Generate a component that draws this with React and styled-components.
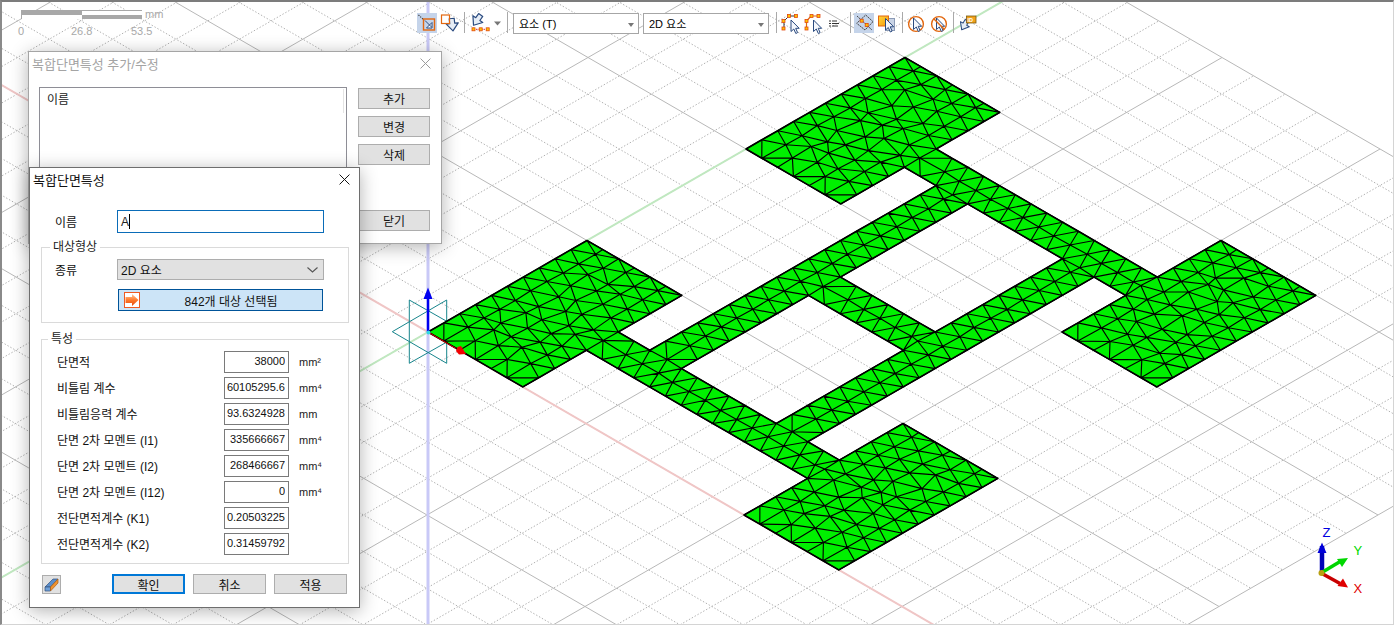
import React from 'react';
import styled, { createGlobalStyle } from 'styled-components';

const FONT = `"Liberation Sans", "Noto Sans CJK KR", sans-serif`;

const Global = createGlobalStyle`
  html, body { margin: 0; padding: 0; background: #fff; overflow: hidden; }
  * { box-sizing: border-box; }
`;

const Stage = styled.main`
  position: relative;
  width: 1394px;
  height: 625px;
  overflow: hidden;
  background: #fff;
  font: 12px ${FONT};
  color: #000;
`;
const Viewport = styled.svg`
  position: absolute;
  inset: 0;
  display: block;
`;
const Frame = styled.div`
  position: absolute;
  inset: 0;
  border-top: 2px solid #7c7c7c;
  border-left: 2px solid #8a8a8a;
  border-right: 1px solid #d4d4d4;
  border-bottom: 1px solid #d4d4d4;
  pointer-events: none;
`;

/* scale bar */
const ScaleBar = styled.div`
  position: absolute;
  left: 21px;
  top: 10px;
  width: 160px;
  color: #a8a8a8;
  font-size: 11px;
`;
const ScaleTrack = styled.div`
  display: flex;
  align-items: center;
  gap: 3px;
  height: 9px;
  line-height: 9px;
`;
const ScaleBars = styled.div`
  display: grid;
  grid-template-columns: 60px 60px;
  grid-template-rows: 4px 4px;
  width: 121px;
  height: 9px;
  border: 1px solid #a8a8a8;
`;
const ScaleCell = styled.i`
  display: block;
  background: ${p => (p.$dark ? '#a8a8a8' : '#fff')};
`;
const ScaleLabels = styled.div`
  display: flex;
  margin-top: 6px;
  margin-left: -3px;
  line-height: 13px;
`;
const ScaleLabel = styled.span`
  width: ${p => p.$w}px;
`;

/* toolbar */
const Toolbar = styled.nav`
  position: absolute;
  left: 417px;
  top: 13px;
  display: flex;
  align-items: flex-start;
`;
const Tool = styled.button`
  display: block;
  width: ${p => p.$w}px;
  height: 20px;
  margin: 0 0 0 ${p => p.$ml || 0}px;
  padding: 0;
  border: 0;
  background: ${p => (p.$active ? '#c5d4ea' : 'transparent')};
  svg { display: block; overflow: visible; }
`;
const Sep = styled.span`
  display: block;
  width: 1px;
  height: 21px;
  margin: -1px 0 0 ${p => p.$ml}px;
  background: #a9a9a9;
`;
const ToolSelect = styled.div`
  display: flex;
  align-items: center;
  justify-content: space-between;
  width: ${p => p.$w}px;
  height: 21px;
  margin-left: ${p => p.$ml}px;
  padding: 0 4px 0 5px;
  border: 1.5px solid #a6a6a6;
  background: #fff;
  font-size: 11px;
  line-height: 18px;
`;
const Caret = styled.i`
  width: 0;
  height: 0;
  border-left: 3.5px solid transparent;
  border-right: 3.5px solid transparent;
  border-top: 4px solid #777;
  margin-top: 2px;
`;

/* windows */
const Win = styled.section`
  position: absolute;
  left: ${p => p.$x}px;
  top: ${p => p.$y}px;
  width: ${p => p.$w}px;
  height: ${p => p.$h}px;
  display: flex;
  flex-direction: column;
  background: #fff;
  border: 1px solid ${p => (p.$active ? '#6e6e6e' : '#a5a5a5')};
  box-shadow: 0 3px 17px rgba(0, 0, 0, 0.3);
`;
const TitleBar = styled.header`
  display: flex;
  align-items: center;
  justify-content: space-between;
  height: 23px;
  padding: 0 ${p => p.$pr}px 0 ${p => p.$pl}px;
  font-size: 13px;
  color: ${p => (p.$dim ? '#a4a4a4' : '#111')};
  svg { display: block; }
`;
const ListBody = styled.div`
  display: flex;
  flex: 1;
  padding: 12px 11px 12px 10px;
  gap: 11px;
`;
const ListBox = styled.div`
  position: relative;
  width: 309px;
  height: 130px;
  padding: 6px 7px;
  border: 1px solid #8e8e96;
  line-height: 13px;
`;
const ListHead = styled.span`
  display: block;
  color: #222;
`;
const ListRule = styled.i`
  position: absolute;
  right: 2px;
  top: 1px;
  width: 1px;
  height: 24px;
  background: #e4e4e4;
`;
const SideButtons = styled.div`
  display: flex;
  flex-direction: column;
  gap: 7px;
  width: 72px;
  margin-top: 1px;
`;
const Btn = styled.button`
  width: ${p => p.$w || 72}px;
  height: ${p => p.$h || 21}px;
  margin: 0;
  margin-top: ${p => (p.$push ? 'auto' : 0)};
  margin-left: ${p => p.$ml || 0}px;
  padding: 0;
  border: ${p => (p.$def ? '2px solid #0078d7' : '1px solid #adadad')};
  background: #e1e1e1;
  color: #111;
  font: 12px ${FONT};
`;

const NameRow = styled.div`
  display: flex;
  align-items: center;
  height: 23px;
  margin: 19px 0 7px 25px;
`;
const RowLabel = styled.label`
  width: 62px;
  color: #111;
`;
const NameField = styled.div`
  display: flex;
  align-items: center;
  width: 207px;
  height: 23px;
  padding-left: 3px;
  border: 1px solid #0a6cb8;
  font-size: 12px;
  color: #222;
`;
const TextCaret = styled.i`
  display: block;
  width: 1px;
  height: 15px;
  background: #000;
`;
const Group = styled.fieldset`
  width: 308px;
  margin: ${p => p.$mt || 0}px 0 0 11px;
  padding: 5px 13px ${p => p.$pb}px ${p => p.$pl}px;
  border: 1px solid #dadada;
  min-width: 0;
`;
const Legend = styled.legend`
  margin-left: ${p => p.$ml}px;
  padding: 0 3px;
  line-height: 14px;
  font-size: 12px;
  color: #222;
`;
const Combo = styled.div`
  display: flex;
  align-items: center;
  justify-content: space-between;
  width: 207px;
  height: 21px;
  padding: 0 5px 0 3px;
  border: 1px solid #adadad;
  background: #e1e1e1;
  font-size: 12px;
  color: #111;
  svg { display: block; }
`;
const TypeRow = styled.div`
  display: flex;
  align-items: center;
`;
const TargetBtn = styled.button`
  display: flex;
  align-items: center;
  width: 205px;
  height: 22px;
  margin: 9px 0 0 63px;
  padding: 0 0 0 5px;
  border: 1px solid #005499;
  background: #cce4f7;
  color: #111;
  font: 12px ${FONT};
  svg { display: block; flex: none; }
`;
const TargetText = styled.span`
  flex: 1;
  text-align: center;
  padding-right: 0;
`;
const PropGrid = styled.div`
  display: flex;
  flex-direction: column;
  gap: 4px;
`;
const PropRow = styled.div`
  display: flex;
  align-items: center;
  height: 22px;
`;
const PropLabel = styled.label`
  width: 167px;
  margin-top: -2px;
  color: #111;
  white-space: nowrap;
`;
const PropValue = styled.input`
  width: 65px;
  height: 22px;
  padding: 0 3px 2px 0;
  border: 1px solid #7a7a7a;
  border-radius: 0;
  outline: 0;
  background: #fff;
  color: #111;
  text-align: right;
  font: 11px ${FONT};
`;
const Unit = styled.span`
  margin-left: 10px;
  font-size: 11px;
  color: #222;
`;
const Footer = styled.footer`
  display: flex;
  align-items: center;
  gap: 8px;
  margin: 10px 0 0 12px;
`;
const IconBtn = styled.button`
  width: 19px;
  height: 19px;
  padding: 0;
  border: 1px solid #adadad;
  background: #e1e1e1;
  svg { display: block; }
`;

/* ------------ mesh model ------------- */
const O = { x: 428, y: 332 };
const P = (a, b) => [O.x + 15.8 * a + 15.9 * b, O.y + 9.15 * (a - b)];
const f = n => n.toFixed(1);

/* a0, a1, b0, b1, run direction */
const RECTS = [
  [0, 6, 0, 10, 'B'], [6, 20, 4, 6, 'A'], [8, 10, 6, 24, 'B'], [10, 16, 14, 16, 'A'], [16, 18, 6, 24, 'B'],
  [6, 20, 24, 26, 'A'], [0, 6, 20, 30, 'B'], [20, 26, 0, 10, 'B'], [20, 26, 20, 30, 'B'],
];
const cells = new Map();
RECTS.forEach(([a0, a1, b0, b1, t]) => {
  for (let a = a0; a < a1; a++) for (let b = b0; b < b1; b++) cells.set(`${a},${b}`, t);
});
const has = (a, b) => cells.has(`${a},${b}`);
const type = (a, b) => cells.get(`${a},${b}`);
const rnd = (a, b, k) => {
  const s = Math.sin(a * 127.1 + b * 311.7 + k * 74.7) * 43758.5453;
  return s - Math.floor(s);
};
const node = (a, b) => {
  const t = type(a, b);
  const interior = has(a, b) && has(a - 1, b) && has(a, b - 1) && has(a - 1, b - 1);
  if (!interior) return P(a, b);
  const same = type(a - 1, b) === t && type(a, b - 1) === t && type(a - 1, b - 1) === t;
  if (!same) return P(a + (rnd(a, b, 1) - 0.5) * 0.15, b + (rnd(a, b, 2) - 0.5) * 0.15);
  const deep = has(a - 2, b) && has(a + 1, b) && has(a, b - 2) && has(a, b + 1);
  const amp = deep ? 0.5 : 0.08;
  const da = t === 'A' && b % 2 ? 0.5 : 0;
  const db = t === 'B' && a % 2 ? 0.5 : 0;
  return P(a + da + (rnd(a, b, 1) - 0.5) * amp, b + db + (rnd(a, b, 2) - 0.5) * amp);
};
const seg = (p, q) => `M${f(p[0])} ${f(p[1])}L${f(q[0])} ${f(q[1])}`;

const buildMesh = () => {
  let fill = '';
  let lines = '';
  let outline = '';
  cells.forEach((t, k) => {
    const [a, b] = k.split(',').map(Number);
    const n00 = node(a, b), n10 = node(a + 1, b), n11 = node(a + 1, b + 1), n01 = node(a, b + 1);
    fill += `M${f(n00[0])} ${f(n00[1])}L${f(n10[0])} ${f(n10[1])}L${f(n11[0])} ${f(n11[1])}L${f(n01[0])} ${f(n01[1])}Z`;
    lines += seg(n00, n10) + seg(n00, n01);
    if (!has(a + 1, b)) lines += seg(n10, n11);
    if (!has(a, b + 1)) lines += seg(n01, n11);
    const even = t === 'A' ? b % 2 === 0 : a % 2 === 0;
    lines += even ? seg(n10, n01) : seg(n00, n11);
    if (!has(a - 1, b)) outline += seg(n00, n01);
    if (!has(a + 1, b)) outline += seg(n10, n11);
    if (!has(a, b - 1)) outline += seg(n00, n10);
    if (!has(a, b + 1)) outline += seg(n01, n11);
  });
  return { fill, lines, outline };
};
const MESH = buildMesh();

const buildGrid = () => {
  let minor = '';
  let major = '';
  for (let k = -40; k <= 40; k += 2) {
    const lines = seg(P(k, -40), P(k, 40)) + seg(P(-40, k), P(40, k));
    if (k % 10 === 0) major += lines;
    else minor += lines;
  }
  return { minor, major };
};
const GRID = buildGrid();

/* ------------ toolbar icons ------------- */
const BLUE = '#2a4a7f';
const ORANGE = '#e2670f';
const Pointer = ({ x, y, s = 1 }) => (
  <path
    transform={`translate(${x} ${y}) scale(${s})`}
    d="M0 0V11.5L2.8 9L4.8 13.5L6.6 12.6L4.7 8.3H8.2Z"
    fill="#f4f7fc"
    stroke={BLUE}
    strokeWidth="1"
    strokeLinejoin="round"
  />
);
const Node = ({ x, y }) => <rect x={x - 1.5} y={y - 1.5} width="3" height="3" fill="#ffc400" stroke="#e2470f" strokeWidth=".8" />;
const Svg = ({ w, children }) => (
  <svg width={w} height="20" viewBox={`0 0 ${w} 20`} aria-hidden="true">{children}</svg>
);
const DownArrow = ({ x, y, t = 0, s = 1 }) => (
  <path
    transform={`translate(${x} ${y}) rotate(${t}) scale(${s})`}
    d="M-2.5 0H2.5V5H6L0 12.5L-6 5H-2.5Z"
    fill="#e6edf6"
    stroke={BLUE}
    strokeWidth="1.2"
    strokeLinejoin="round"
  />
);

const IconWindow = () => (
  <Svg w={20}>
    <path d="M1.5 2L8 8" stroke="#333" strokeWidth="1.1" strokeDasharray="1.2 1.2" />
    <rect x="6.5" y="6" width="11" height="11" fill="#c5d4ea" stroke={ORANGE} strokeWidth="1.4" />
    <path d="M8 7.5L14.5 14M15 9.5V15H9.5Z" fill="#fff" stroke={BLUE} strokeWidth="1" />
  </Svg>
);
const IconHand = () => (
  <Svg w={18}>
    <DownArrow x={10.7} y={5.5} t={-6} />
    <rect x=".5" y="2" width="8" height="8.5" fill="none" stroke={ORANGE} strokeWidth="1.2" />
  </Svg>
);
const IconSnapMenu = () => (
  <Svg w={30}>
    <DownArrow x={8.7} y={2} t={35} />
    <path d="M1.5 16.3H16" stroke="#d33" strokeWidth="1" strokeDasharray="1.5 1" />
    <Node x={1.5} y={16.3} />
    <Node x={8.7} y={16.3} />
    <Node x={15.7} y={16.3} />
    <path d="M22 8.5H29L25.5 12.5Z" fill="#777" />
  </Svg>
);
const IconPathA = () => (
  <Svg w={20}>
    <path d="M3 8V15M4 7L8 3H14" stroke="#333" strokeWidth="1" fill="none" />
    <Node x={2.5} y={8} /><Node x={2.5} y={15.5} /><Node x={8} y={3} /><Node x={15} y={3} />
    <Pointer x={10} y={7} />
  </Svg>
);
const IconPathB = () => (
  <Svg w={18}>
    <path d="M1.5 8V15M2.5 7L6 3H13" stroke={ORANGE} strokeWidth="1.2" fill="none" />
    <Node x={1.5} y={8} /><Node x={1.5} y={15.5} /><Node x={6.5} y={3} /><Node x={13.5} y={3} />
    <Pointer x={8.5} y={7} />
  </Svg>
);
const IconLines = () => (
  <Svg w={10}>
    <path d="M0 8H2M3 8H8M0 10.5H2M3 10.5H10M0 13H2M3 13H9" stroke="#333" strokeWidth="1" />
  </Svg>
);
const IconDiamond = () => (
  <Svg w={20}>
    <path d="M3 3L18 17M11.7 2L19 8.7L11 17L2.7 10.3Z" stroke="#4a4a4a" strokeWidth="1" strokeDasharray="2 .6" fill="none" />
    <Node x={7.7} y={7.7} /><Node x={12.7} y={12} />
  </Svg>
);
const IconWindowCursor = () => (
  <Svg w={18}>
    <rect x="7.5" y="5.5" width="9" height="12" fill="#c9d4e6" stroke="#8b9ab5" strokeWidth="1" />
    <defs>
      <linearGradient id="ywin" x1="0" y1="0" x2="1" y2="1">
        <stop offset="0" stopColor="#ffd53a" />
        <stop offset="1" stopColor="#f59a0c" />
      </linearGradient>
    </defs>
    <rect x=".5" y="3" width="10" height="10" fill="url(#ywin)" stroke={ORANGE} strokeWidth="1" />
    <Pointer x={7.5} y={5.5} />
  </Svg>
);
const IconCircle = ({ slash }) => (
  <Svg w={16}>
    <circle cx="8" cy="11" r="7.4" fill="none" stroke={ORANGE} strokeWidth="1.4" />
    <Pointer x={5.5} y={5} />
    {slash && <path d="M3 6L13 16" stroke={ORANGE} strokeWidth="1.4" />}
  </Svg>
);
const IconId = () => (
  <Svg w={18}>
    <DownArrow x={7} y={7.5} t={30} s={.85} />
    <rect x="6.5" y="3" width="9.5" height="7" fill="#f2a21a" stroke="#7a5a10" strokeWidth=".8" />
    <text x="7.6" y="8.8" fontSize="5.5" fontWeight="700" fill="#fff" fontFamily="Liberation Sans">ID</text>
  </Svg>
);

const CloseX = ({ size, color }) => (
  <svg width={size} height={size} viewBox="0 0 10 10" aria-hidden="true">
    <path d="M.5 .5L9.5 9.5M9.5 .5L.5 9.5" stroke={color} strokeWidth=".9" />
  </svg>
);
const Chevron = () => (
  <svg width="11" height="6" viewBox="0 0 11 6" aria-hidden="true">
    <path d="M.5 .5L5.5 5L10.5 .5" fill="none" stroke="#555" strokeWidth="1.1" />
  </svg>
);
const TargetArrow = () => (
  <svg width="16" height="16" viewBox="0 0 16 16" aria-hidden="true">
    <defs>
      <linearGradient id="ta" x1="0" x2="0" y1="0" y2="1">
        <stop offset="0" stopColor="#ffc9a0" />
        <stop offset=".5" stopColor="#ff7a2a" />
        <stop offset="1" stopColor="#e4480e" />
      </linearGradient>
    </defs>
    <rect x=".5" y=".5" width="15" height="15" fill="#fff" stroke="#ee5a22" />
    <path d="M1.5 5H8V2L14.5 8L8 14V11H1.5Z" fill="url(#ta)" />
  </svg>
);
const Eraser = () => (
  <svg width="17" height="17" viewBox="0 0 17 17" aria-hidden="true">
    <path d="M2 11L10 3H15L7.5 11Z" fill="#5a8ecb" stroke="#33527d" strokeWidth=".7" />
    <path d="M2 11H7.5V15H2Z" fill="#6fa0d8" stroke="#33527d" strokeWidth=".7" />
    <path d="M7.5 11L15 3V7L7.5 15Z" fill="#f0932e" stroke="#a85a12" strokeWidth=".7" />
  </svg>
);

const PROPS = [
  ['단면적', '38000', 'mm²'],
  ['비틀림 계수', '60105295.6', 'mm⁴'],
  ['비틀림응력 계수', '93.6324928', 'mm'],
  ['단면 2차 모멘트 (I1)', '335666667', 'mm⁴'],
  ['단면 2차 모멘트 (I2)', '268466667', 'mm⁴'],
  ['단면 2차 모멘트 (I12)', '0', 'mm⁴'],
  ['전단면적계수 (K1)', '0.20503225', ''],
  ['전단면적계수 (K2)', '0.31459792', ''],
];

const Scene = () => {
  const xAxis = [P(-60, 0), P(40, 0)];
  const yAxis = [P(0, -60), P(0, 60)];
  return (
    <Viewport width="1394" height="625" viewBox="0 0 1394 625" aria-hidden="true">
      <path d={GRID.minor} stroke="#b0b0b0" strokeWidth="1" strokeDasharray="1.4 1.9" fill="none" />
      <path d={GRID.major} stroke="#b8b8b8" strokeWidth="1" fill="none" />
      <path d={seg(xAxis[0], xAxis[1])} stroke="#f0c6c6" strokeWidth="2" />
      <path d={seg(yAxis[0], yAxis[1])} stroke="#c0e8c0" strokeWidth="2" />
      <path d="M428 0V625" stroke="#c9c9f7" strokeWidth="3" />
      <path
        d="M409.3 300V363.3M446.7 300V363.3M392.3 331.7L446.7 300M392.3 331.7L446.7 363.3M409.3 300L465 331.7M409.3 363.3L465 331.7"
        stroke="#17858c"
        strokeWidth="1"
        fill="none"
      />
      <path d={MESH.fill} fill="#00f000" stroke="#00f000" strokeWidth=".6" />
      <path d={MESH.lines} stroke="#000" strokeWidth="1.15" fill="none" />
      <path d={MESH.outline} stroke="#000" strokeWidth="1.6" strokeLinecap="round" fill="none" />
      <path d="M428 332V296" stroke="#0000f0" strokeWidth="2.4" />
      <path d="M428 287.5L432.5 299H423.5Z" fill="#0000f0" />
      <path d="M428 332L456 348.5" stroke="#e00000" strokeWidth="1" />
      <path d="M466 354L459 354.5L456 351L457.5 347L461 346Z" fill="#f00000" />
      <circle cx="428.5" cy="332.5" r="2" fill="#30d8e0" />
      {/* corner triad */}
      <path d="M1322 573V546" stroke="#0000b8" strokeWidth="4.5" />
      <path d="M1322 542.5L1326.5 553H1317.5Z" fill="#0000d8" />
      <path d="M1321 573L1341 561" stroke="#00d400" strokeWidth="3.5" />
      <path d="M1348 558L1337 559L1342 567Z" fill="#00d800" />
      <path d="M1321 573L1340 583.5" stroke="#c80000" strokeWidth="3.5" />
      <path d="M1348 587.5L1343 578.5L1337.5 586Z" fill="#e00000" />
      <circle cx="1321.5" cy="573" r="3" fill="#b8a010" />
      <text x="1322.5" y="537" fontSize="13" fill="#0000e0" fontFamily="Liberation Sans">Z</text>
      <text x="1353.5" y="555" fontSize="13" fill="#00d800" fontFamily="Liberation Sans">Y</text>
      <text x="1353.5" y="593" fontSize="13" fill="#e00000" fontFamily="Liberation Sans">X</text>
    </Viewport>
  );
};

export default function App() {
  return (
    <Stage>
      <Global />
      <Scene />
      <Frame />
      <ScaleBar>
        <ScaleTrack>
          <ScaleBars>
            <ScaleCell $dark /><ScaleCell />
            <ScaleCell /><ScaleCell $dark />
          </ScaleBars>
          <span>mm</span>
        </ScaleTrack>
        <ScaleLabels>
          <ScaleLabel $w={53}>0</ScaleLabel>
          <ScaleLabel $w={60}>26.8</ScaleLabel>
          <ScaleLabel $w={40}>53.5</ScaleLabel>
        </ScaleLabels>
      </ScaleBar>

      <Toolbar>
        <Tool $w={20} $active><IconWindow /></Tool>
        <Tool $w={18} $ml={4}><IconHand /></Tool>
        <Sep $ml={5} />
        <Tool $w={30} $ml={7}><IconSnapMenu /></Tool>
        <Sep $ml={5} />
        <ToolSelect $w={126} $ml={5}>요소 (T)<Caret /></ToolSelect>
        <ToolSelect $w={126} $ml={4}>2D 요소<Caret /></ToolSelect>
        <Sep $ml={7} />
        <Tool $w={20} $ml={4}><IconPathA /></Tool>
        <Tool $w={18} $ml={4}><IconPathB /></Tool>
        <Tool $w={10} $ml={6}><IconLines /></Tool>
        <Sep $ml={11} />
        <Tool $w={20} $ml={3} $active><IconDiamond /></Tool>
        <Tool $w={18} $ml={4}><IconWindowCursor /></Tool>
        <Sep $ml={6} />
        <Tool $w={16} $ml={5}><IconCircle /></Tool>
        <Tool $w={16} $ml={7}><IconCircle slash /></Tool>
        <Sep $ml={6} />
        <Tool $w={18} $ml={6}><IconId /></Tool>
      </Toolbar>

      <Win $x={28} $y={51} $w={414} $h={193}>
        <TitleBar $dim $pl={3} $pr={10}>
          복합단면특성 추가/수정
          <CloseX size={11} color="#9a9a9a" />
        </TitleBar>
        <ListBody>
          <ListBox>
            <ListHead>이름</ListHead>
            <ListRule />
          </ListBox>
          <SideButtons>
            <Btn>추가</Btn>
            <Btn>변경</Btn>
            <Btn>삭제</Btn>
            <Btn $push>닫기</Btn>
          </SideButtons>
        </ListBody>
      </Win>

      <Win $x={29} $y={167} $w={331} $h={441} $active>
        <TitleBar $pl={3} $pr={9}>
          복합단면특성
          <CloseX size={11} color="#111" />
        </TitleBar>
        <NameRow>
          <RowLabel>이름</RowLabel>
          <NameField>A<TextCaret /></NameField>
        </NameRow>
        <Group $pb={11} $pl={13}>
          <Legend $ml={-5}>대상형상</Legend>
          <TypeRow>
            <RowLabel>종류</RowLabel>
            <Combo>2D 요소<Chevron /></Combo>
          </TypeRow>
          <TargetBtn>
            <TargetArrow />
            <TargetText>842개 대상 선택됨</TargetText>
          </TargetBtn>
        </Group>
        <Group $mt={9} $pb={8} $pl={15}>
          <Legend $ml={-9}>특성</Legend>
          <PropGrid>
            {PROPS.map(([label, value, unit]) => (
              <PropRow key={label}>
                <PropLabel>{label}</PropLabel>
                <PropValue readOnly value={value} />
                <Unit>{unit}</Unit>
              </PropRow>
            ))}
          </PropGrid>
        </Group>
        <Footer>
          <IconBtn><Eraser /></IconBtn>
          <Btn $w={73} $h={20} $ml={43} $def>확인</Btn>
          <Btn $w={73} $h={20}>취소</Btn>
          <Btn $w={73} $h={20}>적용</Btn>
        </Footer>
      </Win>
    </Stage>
  );
}
